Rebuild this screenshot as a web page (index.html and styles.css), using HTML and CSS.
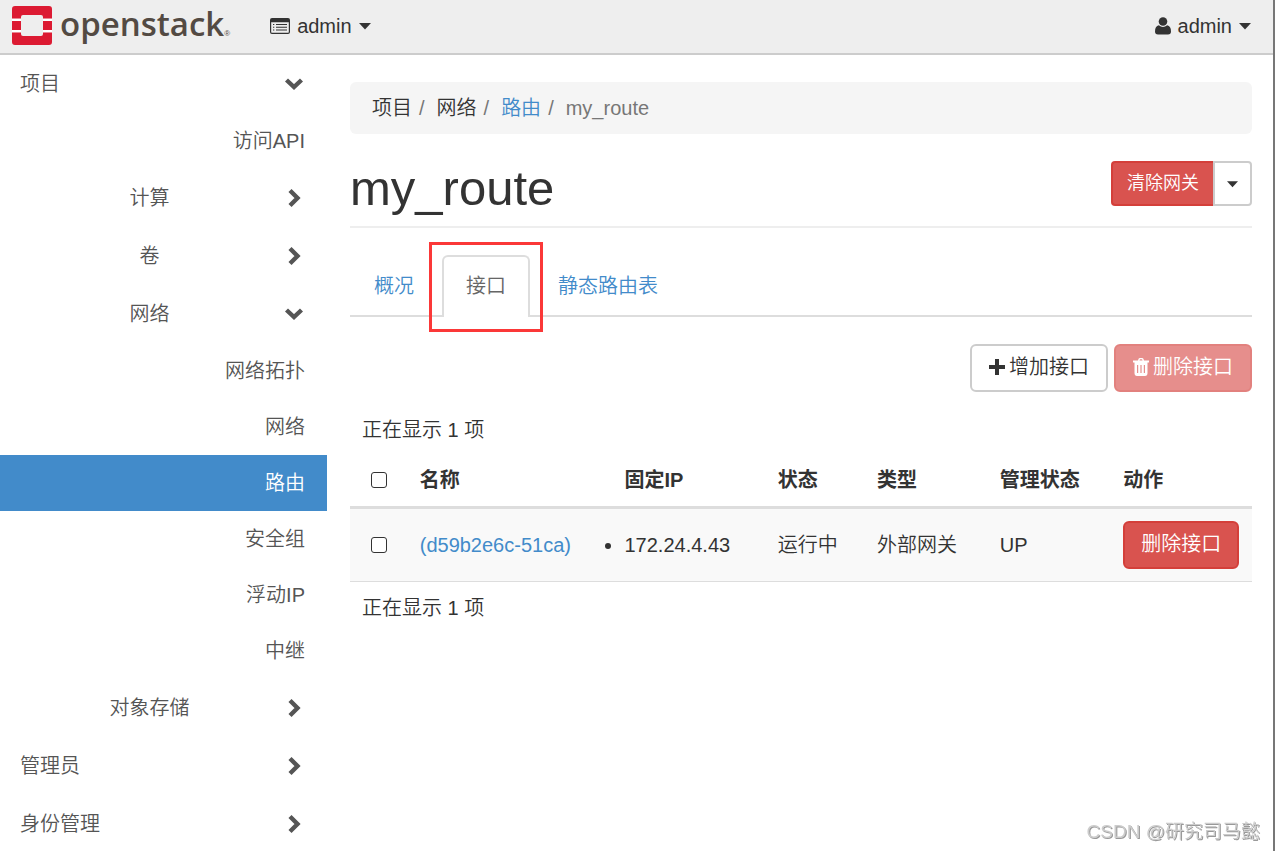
FILE: index.html
```html
<!DOCTYPE html>
<html lang="zh-CN">
<head>
<meta charset="utf-8">
<title>my_route - OpenStack Dashboard</title>
<link rel="stylesheet" href="styles.css">
</head>
<body>
<svg width="0" height="0" class="sprite" aria-hidden="true">
  <symbol id="chev-down" viewBox="0 0 22 22"><path d="M3.500 7 L11 14 L18.500 7" fill="none" stroke="currentColor" stroke-width="4.400"/></symbol>
  <symbol id="chev-right" viewBox="0 0 22 22"><path d="M7 3.500 L14.500 11 L7 18.500" fill="none" stroke="currentColor" stroke-width="4.400"/></symbol>
  <symbol id="caret" viewBox="0 0 12 8"><path d="M0 1h12L6 7.500z" fill="currentColor"/></symbol>
</svg>
<header class="topbar">
  <a class="brand" href="#" aria-label="openstack">
    <svg class="brand-mark" viewBox="0 0 40 39" aria-hidden="true">
      <path fill="#fff" d="M0 12.500h9V15H0zM31 12.500h9V15h-9zM0 24h9v2.500H0zM31 24h9v2.500h-9z"/>
      <path fill="#dc1a32" d="M3 0h34a3 3 0 0 1 3 3v9.500h-9V11a2 2 0 0 0-2-2H11a2 2 0 0 0-2 2v1.500H0V3a3 3 0 0 1 3-3zM0 15h9v9H0zM31 15h9v9h-9zM0 26.500h9V28a2 2 0 0 0 2 2h18a2 2 0 0 0 2-2v-1.500h9V36a3 3 0 0 1-3 3H3a3 3 0 0 1-3-3z"/>
    </svg>
    <span class="brand-name">openstack</span><span class="brand-reg">®</span>
  </a>
  <button class="menu" type="button">
    <svg class="icon-list" viewBox="0 0 20 16" aria-hidden="true"><path fill="currentColor" fill-rule="evenodd" d="M2 0h16a2 2 0 0 1 2 2v12a2 2 0 0 1-2 2H2a2 2 0 0 1-2-2V2a2 2 0 0 1 2-2zM1.200 4.200v10l.5.600h16.600l.5-.6v-10z"/><path stroke="currentColor" stroke-width="1.100" d="M3 6.500h1.300M6 6.500h11M3 9.250h1.300M6 9.250h11M3 12h1.300M6 12h11"/></svg>
    <span>admin</span><svg class="caret"><use href="#caret"/></svg>
  </button>
  <button class="menu menu-user" type="button">
    <svg class="icon-user" viewBox="0 0 16 18" aria-hidden="true"><circle cx="8" cy="4.500" r="4.300" fill="currentColor"/><path fill="currentColor" d="M3.800 8.200Q8 11.600 12.200 8.200Q16 9 16 14.500Q16 17.500 13 17.500H3Q0 17.500 0 14.500Q0 9 3.800 8.200z"/></svg>
    <span>admin</span><svg class="caret"><use href="#caret"/></svg>
  </button>
</header>
<div class="layout">
  <nav class="sidebar">
    <a class="group" href="#"><span>项目</span><svg class="chev"><use href="#chev-down"/></svg></a>
    <a class="leaf" href="#">访问API</a>
    <a class="group sub" href="#"><span>计算</span><svg class="chev"><use href="#chev-right"/></svg></a>
    <a class="group sub" href="#"><span>卷</span><svg class="chev"><use href="#chev-right"/></svg></a>
    <a class="group sub" href="#"><span>网络</span><svg class="chev"><use href="#chev-down"/></svg></a>
    <a class="leaf" href="#">网络拓扑</a>
    <a class="leaf" href="#">网络</a>
    <a class="leaf active" href="#">路由</a>
    <a class="leaf" href="#">安全组</a>
    <a class="leaf" href="#">浮动IP</a>
    <a class="leaf" href="#">中继</a>
    <a class="group sub" href="#"><span>对象存储</span><svg class="chev"><use href="#chev-right"/></svg></a>
    <a class="group" href="#"><span>管理员</span><svg class="chev"><use href="#chev-right"/></svg></a>
    <a class="group" href="#"><span>身份管理</span><svg class="chev"><use href="#chev-right"/></svg></a>
  </nav>
  <main class="content">
    <ol class="breadcrumb">
      <li>项目</li><li>网络</li><li><a href="#">路由</a></li><li class="current">my_route</li>
    </ol>
    <div class="page-header">
      <h1>my_route</h1>
      <div class="btn-group">
        <button class="btn danger compact" type="button">清除网关</button>
        <button class="btn toggle" type="button" aria-label="更多操作"><svg class="caret small"><use href="#caret"/></svg></button>
      </div>
    </div>
    <div class="tabs">
      <a class="tab" href="#">概况</a>
      <a class="tab selected" href="#">接口</a>
      <a class="tab" href="#">静态路由表</a>
    </div>
    <div class="actions">
      <button class="btn" type="button"><svg class="btn-icon" viewBox="0 0 16 18" aria-hidden="true"><path fill="currentColor" d="M6 1h4v6h6v4h-6v6H6v-6H0V7h6z"/></svg>增加接口</button>
      <button class="btn danger" type="button" disabled><svg class="btn-icon" viewBox="0 0 16 18" aria-hidden="true"><path fill="currentColor" fill-rule="evenodd" d="M5 2.500 5.500 1Q5.800 0 7 0h2q1.200 0 1.500 1l.5 1.500h5V4.500h-1.500V15q0 3-2.500 3H4q-2.500 0-2.500-3V4.500H0v-2zM6.500 2.500h3L9 1.300H7zM4 7v8h1.200V7zM7.400 7v8h1.200V7zM10.800 7v8H12V7z"/></svg>删除接口</button>
    </div>
    <p class="count">正在显示 1 项</p>
    <table class="grid">
      <colgroup><col class="c-check"><col class="c-name"><col class="c-ip"><col class="c-status"><col class="c-type"><col class="c-admin"><col class="c-action"></colgroup>
      <thead>
        <tr><th><input type="checkbox" aria-label="全选"></th><th>名称</th><th>固定IP</th><th>状态</th><th>类型</th><th>管理状态</th><th>动作</th></tr>
      </thead>
      <tbody>
        <tr><td><input type="checkbox" aria-label="选择 d59b2e6c-51ca"></td><td><a href="#">(d59b2e6c-51ca)</a></td><td><ul><li>172.24.4.43</li></ul></td><td>运行中</td><td>外部网关</td><td>UP</td><td><button class="btn danger" type="button">删除接口</button></td></tr>
      </tbody>
    </table>
    <p class="count">正在显示 1 项</p>
  </main>
</div>
<div class="watermark">CSDN @研究司马懿</div>
</body>
</html>
```
FILE: styles.css
```css
* { box-sizing: border-box; }

body {
  margin: 0;
  height: 100vh;
  display: flex;
  flex-direction: column;
  overflow: hidden;
  border-right: 2px solid #777;
  background: #fff;
  color: #333;
  font: 350 20px/28px "Liberation Sans", "Noto Sans CJK SC", sans-serif;
}

a { color: #428bca; text-decoration: none; }
button { font: inherit; color: inherit; cursor: pointer; }
.sprite { position: absolute; }

.topbar {
  flex: none;
  display: flex;
  align-items: center;
  height: 55px;
  padding: 0 22px 2px 12px;
  background: #eee;
  border-bottom: 2px solid #ccc;
}
.brand { display: flex; align-items: center; color: #534a43; }
.brand-mark { width: 40px; height: 39px; margin-right: 8px; }
.brand-name { font: 600 33px/40px "Open Sans", sans-serif; padding-bottom: 4px; }
.brand-reg { font-size: 8px; line-height: 10px; padding-top: 16px; }
.menu {
  display: flex;
  align-items: center;
  gap: 7px;
  margin-left: 40px;
  padding: 0;
  border: 0;
  background: none;
}
.menu-user { margin-left: auto; }
.icon-list { width: 20px; height: 16px; }
.icon-user { width: 16px; height: 18px; }
.caret { width: 12px; height: 8px; }
.caret.small { width: 11px; }

.layout { flex: 1; min-height: 0; display: flex; }
.sidebar { flex: none; width: 327px; overflow: hidden; }
.sidebar a { color: #555; }
.group {
  display: flex;
  align-items: center;
  gap: 4px;
  height: 58px;
  padding: 0 22px 0 20px;
}
.group span { flex: 1; }
.sub span { text-align: center; }
.chev { width: 22px; height: 22px; }
.leaf { display: block; padding: 14px 22px; text-align: right; }
.sidebar .active { background: #428bca; color: #fff; }

.content { flex: 1; min-width: 0; padding: 27px 21px 0 23px; }
.breadcrumb {
  display: flex;
  margin: 0 0 27px;
  padding: 12px 22px;
  list-style: none;
  background: #f5f5f5;
  border-radius: 6px;
}
.breadcrumb li + li::before { content: "/"; padding: 0 12px 0 7px; color: #777; }
.breadcrumb .current { color: #777; }

.page-header {
  display: flex;
  justify-content: space-between;
  align-items: flex-start;
  padding-bottom: 10px;
  border-bottom: 2px solid #eee;
}
h1 { margin: 0; font-size: 49px; font-weight: 400; line-height: 55px; }

.btn {
  display: inline-flex;
  align-items: center;
  gap: 4px;
  padding: 8px 16px;
  border: 2px solid #ccc;
  border-radius: 6px;
  background: #fff;
}
.btn.danger { background: #d9534f; border-color: #d43f3a; color: #fff; }
.btn:disabled { opacity: .65; }
.btn-icon { width: 16px; height: 18px; }
.btn-group { display: flex; }
.btn-group .btn { height: 45px; border-radius: 0 4px 4px 0; }
.btn-group .compact { padding: 6px 14px 8px; font-size: 18px; border-right: 0; border-radius: 4px 0 0 4px; }
.btn-group .toggle { padding: 8px 12px; }

.tabs { display: flex; gap: 4px; margin-top: 27px; border-bottom: 2px solid #ddd; }
.tab { padding: 15px 22px; border: 2px solid transparent; border-bottom: 0; }
.tab.selected {
  position: relative;
  margin-bottom: -2px;
  padding-bottom: 17px;
  border-color: #ddd;
  border-radius: 6px 6px 0 0;
  background: #fff;
  color: #666;
}
.tab.selected::after { content: ""; position: absolute; inset: -15px; border: 3px solid #fb3838; }

.actions { display: flex; justify-content: flex-end; gap: 6px; margin-top: 27px; }
.actions .btn { padding: 7px 17px 9px; }
.count { margin: 0; padding: 12px; }
.actions + .count { padding-top: 24px; }

.grid { width: 100%; table-layout: fixed; border-collapse: separate; border-spacing: 0; }
.grid th { padding: 10px 12px 12px; text-align: left; font-weight: 700; border-bottom: 3px solid #ddd; }
.grid td { padding: 12px; background: #f9f9f9; border-bottom: 1px solid #ddd; }
.grid td .btn { padding: 7px 16px 9px; }
.grid th:first-child, .grid td:first-child { padding-left: 21px; }
.grid ul { margin: 0; padding: 0; }
.c-check { width: 6.4%; }
.c-name { width: 22.7%; }
.c-ip { width: 17%; }
.c-status { width: 11%; }
.c-type { width: 13.6%; }
.c-admin { width: 13.7%; }
.c-action { width: 15.6%; }
.grid input {
  appearance: none;
  display: block;
  width: 16px;
  height: 16px;
  margin: 0;
  border: 1px solid #333;
  border-radius: 3px;
  background: #fff;
}

.watermark {
  position: fixed;
  right: 15px;
  bottom: 5px;
  font-size: 19px;
  color: #ccc;
  text-shadow: 1px 1px 0 #999;
}
```
